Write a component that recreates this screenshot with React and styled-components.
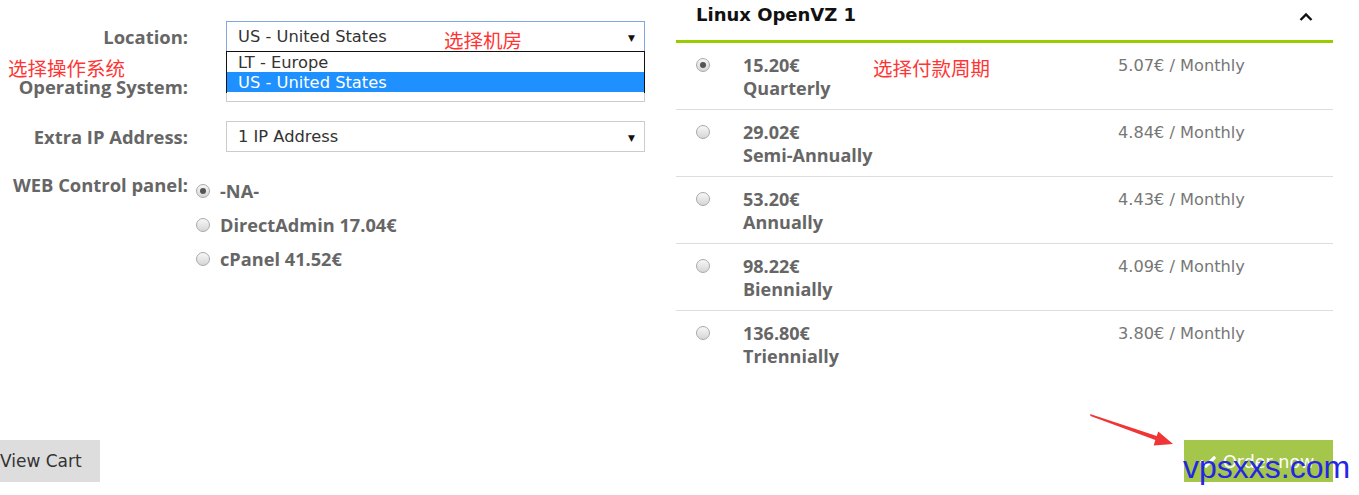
import React from "react";
import styled, { createGlobalStyle } from "styled-components";
import { FaCheck } from "react-icons/fa";

const GlobalStyle = createGlobalStyle`
    body {
        margin: 0;
        background: #fff;
        font-family: "Open Sans", sans-serif;
    }
`;

const Page = styled.div`
    position: relative;
    width: 1359px;
    height: 495px;
    overflow: hidden;
    display: flex;
    flex-direction: column;
`;

const Main = styled.div`
    display: flex;
    align-items: flex-start;
`;

const FormColumn = styled.div`
    width: 676px;
    padding-top: 21px;
`;

const FormRow = styled.div`
    display: flex;
    align-items: ${(p) => (p.$top ? "flex-start" : "center")};
    margin-bottom: 19px;
`;

const Label = styled.div`
    width: 188px;
    flex-shrink: 0;
    text-align: right;
    font-family: "Open Sans", sans-serif;
    font-weight: 700;
    font-size: 18.4px;
    line-height: 24px;
    color: #666;
    padding-top: ${(p) => (p.$top ? "2px" : "0")};
    white-space: nowrap;
`;

const Field = styled.div`
    position: relative;
    width: 419px;
    margin-left: 38px;
`;

const Select = styled.div`
    box-sizing: border-box;
    height: 31px;
    border: 1px solid ${(p) => (p.$focused ? "#7fa7e2" : "#cccccc")};
    background: #fff;
    display: flex;
    align-items: center;
    justify-content: space-between;
    padding: 0 9px 0 11px;
    font-family: "DejaVu Sans", sans-serif;
    font-size: 16.3px;
    color: #333;
`;

const Caret = styled.span`
    font-size: 9px;
    color: #111;
    margin-top: 2px;
`;

const OptionList = styled.div`
    position: absolute;
    z-index: 2;
    top: 30px;
    left: 0;
    right: 0;
    box-sizing: border-box;
    border: 1px solid #111;
    border-bottom: none;
    background: #fff;
    padding-bottom: 1px;
`;

const Option = styled.div`
    height: 20px;
    line-height: 21px;
    padding-left: 11px;
    font-family: "DejaVu Sans", sans-serif;
    font-size: 16.3px;
    color: ${(p) => (p.$active ? "#fff" : "#333")};
    background: ${(p) => (p.$active ? "#1e90ff" : "transparent")};
`;

const RadioList = styled.div`
    margin-left: 8px;
    margin-top: 3px;
`;

const RadioItem = styled.label`
    display: flex;
    align-items: center;
    height: 34px;
    gap: 10px;
    font-family: "Open Sans", sans-serif;
    font-weight: 700;
    font-size: 18.2px;
    color: #666;
`;

const Radio = styled.span`
    position: relative;
    display: block;
    flex-shrink: 0;
    box-sizing: border-box;
    width: 14px;
    height: 14px;
    border-radius: 50%;
    border: 1px solid #aaa;
    background: linear-gradient(#f7f7f7, #d6d6d6);
    margin-top: ${(p) => p.$mt || 0};

    &::after {
        content: "";
        display: ${(p) => (p.$checked ? "block" : "none")};
        position: absolute;
        left: 3px;
        top: 3px;
        width: 6px;
        height: 6px;
        border-radius: 50%;
        background: #555;
    }
`;

const Panel = styled.div`
    width: 657px;
`;

const PanelHeader = styled.div`
    box-sizing: border-box;
    height: 43px;
    display: flex;
    align-items: flex-start;
    justify-content: space-between;
    padding: 3px 20px 0 20px;
    border-bottom: 3px solid #99cc00;
`;

const PanelTitle = styled.div`
    font-family: "DejaVu Sans", sans-serif;
    font-weight: 700;
    font-size: 18px;
    line-height: 24px;
    color: #111;
`;

const Chevron = styled.svg`
    margin-top: 9px;
`;

const CycleRow = styled.div`
    display: grid;
    grid-template-columns: 47px 375px 1fr;
    box-sizing: border-box;
    padding: 11px 0 0 20px;
    border-bottom: ${(p) => (p.$last ? "none" : "1px solid #dddddd")};
    height: ${(p) => (p.$last ? "66px" : "67px")};
`;

const Price = styled.div`
    font-family: "Open Sans", sans-serif;
    font-weight: 700;
    font-size: 18px;
    line-height: 23px;
    color: #666;
`;

const Monthly = styled.div`
    font-family: "DejaVu Sans", sans-serif;
    font-size: 16.2px;
    line-height: 23px;
    color: #777;
`;

const Footer = styled.div`
    display: flex;
    justify-content: space-between;
    align-items: flex-start;
    margin-top: 63px;
    padding-right: 26px;
`;

const CartButton = styled.div`
    box-sizing: border-box;
    width: 100px;
    height: 42px;
    background: #dddddd;
    font-family: "DejaVu Sans", sans-serif;
    font-size: 17px;
    line-height: 42px;
    color: #333;
`;

const OrderButton = styled.div`
    box-sizing: border-box;
    width: 149px;
    height: 42px;
    background: #a4c64b;
    display: flex;
    align-items: center;
    gap: 7px;
    padding: 2px 0 0 16px;
    font-family: "DejaVu Sans", sans-serif;
    font-size: 17.5px;
    color: #fff;
`;

const Note = styled.div`
    position: absolute;
    z-index: 3;
    left: ${(p) => p.$x}px;
    top: ${(p) => p.$y}px;
    font-family: "Noto Sans CJK SC", sans-serif;
    font-size: 19.5px;
    line-height: 24px;
    color: #ff3535;
    white-space: nowrap;
`;

const Arrow = styled.svg`
    position: absolute;
    left: 1085px;
    top: 405px;
`;

const Watermark = styled.div`
    position: absolute;
    z-index: 4;
    left: 1183px;
    top: 451px;
    font-family: "Liberation Sans", Arial, sans-serif;
    font-size: 32px;
    line-height: 32px;
    color: #2525e6;
`;

const CYCLES = [
    { price: "15.20€", name: "Quarterly", monthly: "5.07€ / Monthly", checked: true },
    { price: "29.02€", name: "Semi-Annually", monthly: "4.84€ / Monthly" },
    { price: "53.20€", name: "Annually", monthly: "4.43€ / Monthly" },
    { price: "98.22€", name: "Biennially", monthly: "4.09€ / Monthly" },
    { price: "136.80€", name: "Triennially", monthly: "3.80€ / Monthly" },
];

const PANELS = [
    { name: "-NA-", checked: true },
    { name: "DirectAdmin 17.04€" },
    { name: "cPanel 41.52€" },
];

const App = () => {
    return (
        <Page>
            <GlobalStyle />
            <Main>
                <FormColumn>
                    <FormRow>
                        <Label>Location:</Label>
                        <Field>
                            <Select $focused>
                                <span>US - United States</span>
                                <Caret>▼</Caret>
                            </Select>
                            <OptionList>
                                <Option>LT - Europe</Option>
                                <Option $active>US - United States</Option>
                            </OptionList>
                        </Field>
                    </FormRow>
                    <FormRow>
                        <Label>Operating System:</Label>
                        <Field>
                            <Select />
                        </Field>
                    </FormRow>
                    <FormRow>
                        <Label>Extra IP Address:</Label>
                        <Field>
                            <Select>
                                <span>1 IP Address</span>
                                <Caret>▼</Caret>
                            </Select>
                        </Field>
                    </FormRow>
                    <FormRow $top>
                        <Label $top>WEB Control panel:</Label>
                        <RadioList>
                            {PANELS.map((p) => (
                                <RadioItem key={p.name}>
                                    <Radio $checked={p.checked} />
                                    {p.name}
                                </RadioItem>
                            ))}
                        </RadioList>
                    </FormRow>
                </FormColumn>

                <Panel>
                    <PanelHeader>
                        <PanelTitle>Linux OpenVZ 1</PanelTitle>
                        <Chevron width="14" height="10" viewBox="0 0 14 10">
                            <polyline points="1.5,8 7,2.5 12.5,8" fill="none" stroke="#111" strokeWidth="2.4" />
                        </Chevron>
                    </PanelHeader>
                    {CYCLES.map((c, i) => (
                        <CycleRow key={c.name} $last={i === CYCLES.length - 1}>
                            <div>
                                <Radio $checked={c.checked} $mt="4px" />
                            </div>
                            <Price>
                                {c.price}
                                <br />
                                {c.name}
                            </Price>
                            <Monthly>{c.monthly}</Monthly>
                        </CycleRow>
                    ))}
                </Panel>
            </Main>

            <Footer>
                <CartButton>View Cart</CartButton>
                <OrderButton>
                    <FaCheck size={16} />
                    Order now
                </OrderButton>
            </Footer>

            <Note $x={8} $y={56}>选择操作系统</Note>
            <Note $x={444} $y={28}>选择机房</Note>
            <Note $x={873} $y={56}>选择付款周期</Note>

            <Arrow width="95" height="50" viewBox="0 0 95 50">
                <polygon
                    points="5,9 5.5,11 70.3,34.9 68.7,40.5 88,39 73.3,26.4 71.7,31.1"
                    fill="#ef3535"
                />
            </Arrow>
            <Watermark>vpsxxs.com</Watermark>
        </Page>
    );
};

export default App;
